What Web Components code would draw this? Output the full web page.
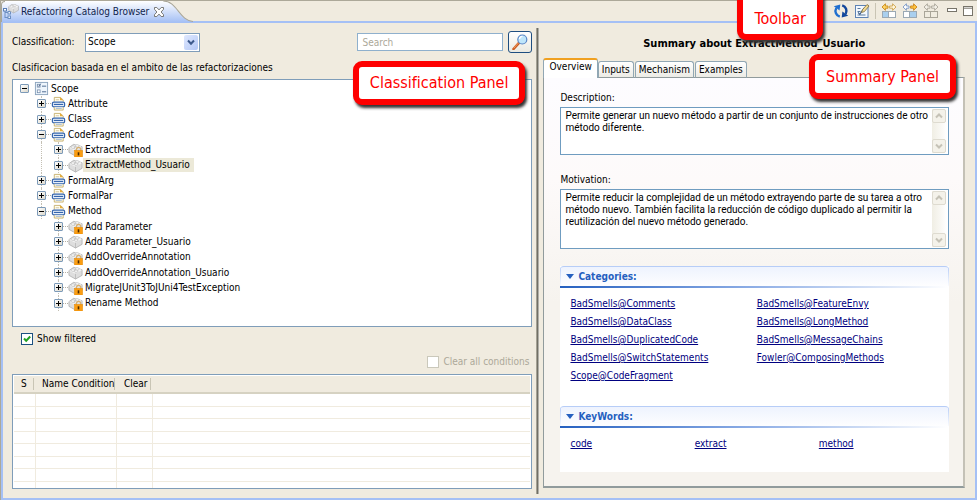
<!DOCTYPE html>
<html lang="es">
<head>
<meta charset="utf-8">
<title>Refactoring Catalog Browser</title>
<style>
html,body{margin:0;padding:0}
body{font:10px/12px "DejaVu Sans Condensed",Roboto,sans-serif;color:#000;background:#f0ebdf}
</style>
</head>
<body>
<catalog-view></catalog-view>
<script>
const define=(name,html,setup)=>customElements.define(name,class extends HTMLElement{
  constructor(){super();this.attachShadow({mode:'open'});}
  connectedCallback(){
    if(this.shadowRoot.childNodes.length)return;
    const t=document.createElement('template');
    t.innerHTML='<style>*{box-sizing:border-box}[hidden]{display:none}button,input,select,textarea{font:inherit;color:inherit;margin:0}</style>'+(typeof html==='function'?html(this):html);
    this.shadowRoot.append(t.content.cloneNode(true));
    if(setup)setup(this,this.shadowRoot);
  }
});

/* ---------- icons ---------- */
const brick='<path d="M1 6l5-3.500 3 .8L15 5v6l-7 4-7-4z" fill="#dedede" stroke="#a8a8a8" stroke-width=".8"/><path d="M1.200 6L8 9.300 14.800 5.200 9 2.400z" fill="#f6f6f6"/><path d="M8 9.300V15" stroke="#b4b4b4" stroke-width=".8"/><ellipse cx="5.300" cy="5.400" rx="2.200" ry="1.300" fill="#fff" stroke="#b0b0b0" stroke-width=".7"/><ellipse cx="9.800" cy="4.200" rx="2.200" ry="1.300" fill="#fff" stroke="#b0b0b0" stroke-width=".7"/><ellipse cx="8.600" cy="6.600" rx="2" ry="1.200" fill="#fff" stroke="#b0b0b0" stroke-width=".7"/>';
const cells=(a,b,s)=>`<rect x="1.5" y="8.5" width="6" height="6" fill="${a}" stroke="${s}"/><rect x="7.5" y="8.5" width="7" height="6" fill="${b}" stroke="${s}"/>`;
const arrowL=(f,s)=>`<path d="M1 4l3.400-3.200V3H7v2.200H4.400v2.100z" fill="${f}" stroke="${s}" stroke-width=".9"/>`;
const arrowR=(f,s)=>`<path d="M15 4l-3.400-3.200V3H8.600v2.200h3v2.100z" fill="${f}" stroke="${s}" stroke-width=".9"/>`;
const ICONS={
  view:'<path d="M2 5v9M2 8.500h3M2 13.500h3" stroke="#6d8fc2" fill="none"/><rect x=".5" y="4.500" width="3" height="2.500" fill="#fff" stroke="#5b7fb5"/><rect x="5" y="7.500" width="2.500" height="2.500" fill="#e8f0fb" stroke="#6d8fc2"/><rect x="5" y="12" width="2.500" height="2.500" fill="#e8f0fb" stroke="#6d8fc2"/><g transform="translate(5 -1.500) scale(.7)">'+brick+'</g>',
  scope:'<rect x="1.500" y="1.500" width="13" height="13" fill="#eef5fc" stroke="#8ba3bd"/><rect x="3.500" y="3.500" width="3" height="3" fill="#fff" stroke="#6f87a8" stroke-width=".8"/><path d="M4.200 4.800l1 1 2-3" stroke="#3a5580" fill="none" stroke-width=".8"/><rect x="3.500" y="9.500" width="3" height="3" fill="#fff" stroke="#6f87a8" stroke-width=".8"/><path d="M8.500 5.500h4.500M8.500 11.500h4.500" stroke="#46648c"/>',
  group:'<path d="M3.500 6V1.500H10l3 2.700V6" fill="#fffdf0" stroke="#c3aa64" stroke-width=".9"/><path d="M9.500 1v3.500H13z" fill="#e6ac3c"/><path d="M5 4h3.500" stroke="#c5b588" stroke-width=".8"/><rect x="1.500" y="6.500" width="13" height="5" rx="1.500" fill="#eef4fc" stroke="#3565ad" stroke-width="1.300"/><path d="M3 9h10" stroke="#3565ad" stroke-width="1.300"/><path d="M3.500 12v3h9.500v-3" fill="#fffbe8" stroke="#c3aa64" stroke-width=".9"/><path d="M5 13.200h6.500" stroke="#8aa6cf" stroke-width=".8"/>',
  brick,
  locked:brick+'<path d="M9 10V8a2.300 2.300 0 014.600 0v2" fill="none" stroke="#d8b070" stroke-width="1.200"/><rect x="7" y="9" width="8.500" height="7" fill="#fb9d12" stroke="#e58a06" stroke-width=".6"/><path d="M11.200 11v3.300" stroke="#4a2a00" stroke-width="1.700"/>',
  refresh:'<path d="M6.800 13.700A6 6 0 013.300 5" fill="none" stroke="#1f6fd0" stroke-width="2.400"/><path d="M.8 3.200L7.300 1.500 6.600 7.600z" fill="#1f6fd0"/><path d="M9.200 2.300a6 6 0 013.500 8.700" fill="none" stroke="#12479c" stroke-width="2.400"/><path d="M15.200 12.800L8.700 14.500 9.400 8.400z" fill="#12479c"/>',
  edit:'<rect x="1.500" y="2.500" width="12.500" height="12" fill="#f3f8fe" stroke="#5e83b4"/><path d="M3.500 5.500h3M3.500 8.500h3M3.500 12h8" stroke="#5b7a9e"/><path d="M4 9.300l1.800 2L10 5" fill="none" stroke="#3b5c88" stroke-width="1.100"/><path d="M7.500 9.500l1-2.800L13 1.500l2 1.500-4.600 5.600z" fill="#f4dc93" stroke="#81703e" stroke-width=".8"/>',
  showLeft:arrowL('#ffd568','#c78a1a')+arrowR('#fff6da','#cda24c')+cells('#a9cfee','#fff','#9ba9b4'),
  showRight:arrowL('#fff','#7695c4')+arrowR('#ffc53f','#c9831a')+cells('#fff','#a9cfee','#9ba9b4'),
  showBoth:arrowL('#f4f1e8','#a9a598')+arrowR('#f4f1e8','#a9a598')+cells('#f0ece0','#f0ece0','#a9a598'),
  min:'<rect x="3.500" y="5.500" width="9" height="3" fill="#fff" stroke="#77746a"/>',
  max:'<rect x="3.500" y="3.500" width="9" height="9" fill="#fff" stroke="#77746a"/><path d="M3 5.200h10" stroke="#77746a"/>',
  close:'<path d="M3.500 3.500h2.300L8 5.900l2.200-2.400h2.300v1.800L10.100 8l2.400 2.700v1.800h-2.300L8 10.100l-2.200 2.400H3.500v-1.800L5.900 8 3.500 5.300z" fill="#fff" stroke="#6c6c68" stroke-width=".9"/>',
  find:'<path d="M1.500 15L7 8.800" stroke="#cc5a1e" stroke-width="2.600" stroke-linecap="round"/><path d="M1.800 14.200L6.400 9" stroke="#f3a66d" stroke-width=".9"/><circle cx="10.300" cy="5.500" r="4.500" fill="#bfe6fb" stroke="#5a86c6" stroke-width="1.200"/><path d="M7.500 5a3 3 0 013-2.600" stroke="#fff" stroke-width="1.400" fill="none"/>'
};
define('app-icon',el=>`<style>:host{display:inline-block;width:16px;height:16px;flex:none}svg{display:block;width:100%;height:100%}</style>
<svg viewBox="0 0 16 16" aria-hidden="true">${ICONS[el.getAttribute('name')]}</svg>`);

define('tool-button',el=>`<style>:host{display:block;flex:none}button{display:block;border:0;background:none;padding:0}app-icon{display:block}</style>
<button type="button" aria-label="${el.getAttribute('label')}"><app-icon name="${el.getAttribute('icon')}"></app-icon></button>`);

/* ---------- title bar ---------- */
define('view-titlebar',`<style>
:host{display:flex;height:23px;border-top:1px solid #aca899;border-bottom:2px solid #a5c0f5;position:relative}
.tab{display:flex;align-items:center;gap:2px;position:relative;padding:0 26px 0 2px;margin-bottom:-1px;color:#10244e}
.tab>svg{position:absolute;inset:0;width:100%;height:100%}
.tab>*:not(svg){position:relative}
.tools{margin-left:auto;display:flex;align-items:center;gap:5px;padding-right:1px}
.sep{width:1px;height:16px;background:#c9c4b4}
.win{display:flex}
</style>
<div class="tab"><svg viewBox="0 0 192 21" preserveAspectRatio="none" aria-hidden="true"><defs><linearGradient id="g" x2="0" y2="1"><stop offset="0" stop-color="#fff"/><stop offset="1" stop-color="#a5c0f5"/></linearGradient></defs><path d="M0 21V4Q0 0 4 0H162C176 0 178 20 192 20.500V21z" fill="url(#g)"/><path d="M.5 21V4Q.5 .5 4 .5M162 0C176 0 178 20 192 20.500" fill="none" stroke="#a9a697"/></svg>
<app-icon name="view"></app-icon><span>Refactoring Catalog Browser</span><tool-button icon="close" label="Close"></tool-button></div>
<div class="tools"><tool-button icon="refresh" label="Refresh"></tool-button><tool-button icon="edit" label="Edit"></tool-button><span class="sep"></span>
<tool-button icon="showLeft" label="Show left"></tool-button><tool-button icon="showRight" label="Show right"></tool-button><tool-button icon="showBoth" label="Show both"></tool-button>
<div class="win"><tool-button icon="min" label="Minimize"></tool-button><tool-button icon="max" label="Maximize"></tool-button></div></div>`);

define('call-out',`<style>:host{display:block;border:6px solid #fe0000;border-radius:9px;background:#fff;box-shadow:2px 3px 3px #333;color:#f00;font-size:16px;line-height:20px;white-space:nowrap}</style><slot></slot>`);

/* ---------- classification side ---------- */
define('filter-bar',`<style>
:host{display:flex;align-items:center;height:22px}
label{width:73px;flex:none}
.sel{position:relative;width:115px;height:19px;flex:none}
select{width:100%;height:100%;appearance:none;border:1px solid #7f9db9;border-radius:0;background:#fff;padding:0 0 0 2px}
.arrow{position:absolute;right:2px;top:2px;width:14px;height:15px;border-radius:2px;background:linear-gradient(135deg,#dfe8fe,#b4c8f6);pointer-events:none}
.arrow svg{display:block;width:100%;height:100%}
input{margin-left:auto;width:146px;height:18px;border:1px solid #8fb0cd;background:#fff;padding:0 4px}
input::placeholder{color:#aca899;opacity:1}
button{width:24px;height:22px;margin-left:5px;padding:0 0 0 3px;border:1px solid #1f4e80;border-radius:3px;background:linear-gradient(#fff,#ebe9e0)}
app-icon{display:block}
</style>
<label for="c">Classification:</label><div class="sel"><select id="c"><option>Scope</option><option>Class</option></select><span class="arrow"><svg viewBox="0 0 14 15"><path d="M4 5.500l3 3.200 3-3.200" fill="none" stroke="#3d5a8c" stroke-width="2"/></svg></span></div>
<input type="search" placeholder="Search" aria-label="Search"><button type="button" aria-label="Search"><app-icon name="find"></app-icon></button>`);

define('tree-item',el=>{
  const lvl=+el.getAttribute('level'),open=el.hasAttribute('open');
  return `<style>
:host{display:flex;align-items:center;padding-left:${7+lvl*17}px;flex:1 1 0;min-height:0;position:relative;white-space:nowrap}
.guide{position:absolute;top:0;bottom:0;width:0;border-left:1px dotted #c4c0b4}
.line{width:5px;border-top:1px dotted #b4b0a4;flex:none}
button{width:9px;height:9px;padding:0;border:1px solid #7c9ab8;border-radius:1px;background:linear-gradient(135deg,#fff,#dcd8cc);flex:none;position:relative;z-index:1}
button svg{display:block;width:7px;height:7px}
app-icon{width:15px;height:15px}
span.t{padding:1px 4px 1px 2px}
:host([selected]) .t{background:#ece9d8}
</style>
${lvl>0?`<i class="guide" style="left:28px"${el.hasAttribute('last')?' hidden':''}></i>`:''}${lvl>1?'<i class="guide" style="left:45px"></i>':''}
<button type="button" aria-label="${open?'Collapse':'Expand'}"><svg viewBox="0 0 7 7"><path d="M1 3.500h5${open?'':'M3.500 1v5'}" stroke="#000"/></svg></button>
<i class="line" style="${lvl?'':'visibility:hidden'}"></i><app-icon name="${el.getAttribute('icon')}"></app-icon><span class="t"><slot></slot></span>`;
},el=>{el.setAttribute('role','treeitem');el.setAttribute('aria-level',+el.getAttribute('level')+1);});

define('scope-tree',`<style>
:host{display:block;background:#fff;border:1px solid #7f9db9;padding:1px 0 15px}
.rows{display:flex;flex-direction:column;height:230px}
</style>
<div class="rows" role="tree">
<tree-item level="0" icon="scope" open>Scope</tree-item>
<tree-item level="1" icon="group">Attribute</tree-item>
<tree-item level="1" icon="group">Class</tree-item>
<tree-item level="1" icon="group" open>CodeFragment</tree-item>
<tree-item level="2" icon="locked">ExtractMethod</tree-item>
<tree-item level="2" icon="brick" selected>ExtractMethod_Usuario</tree-item>
<tree-item level="1" icon="group">FormalArg</tree-item>
<tree-item level="1" icon="group">FormalPar</tree-item>
<tree-item level="1" icon="group" open>Method</tree-item>
<tree-item level="2" last icon="locked">Add Parameter</tree-item>
<tree-item level="2" last icon="brick">Add Parameter_Usuario</tree-item>
<tree-item level="2" last icon="locked">AddOverrideAnnotation</tree-item>
<tree-item level="2" last icon="brick">AddOverrideAnnotation_Usuario</tree-item>
<tree-item level="2" last icon="locked">MigrateJUnit3ToJUni4TestException</tree-item>
<tree-item level="2" last icon="locked">Rename Method</tree-item>
</div>`);

define('check-option',`<style>
:host{display:flex;align-items:center}
label{display:flex;align-items:center;gap:4px}
input{appearance:none;width:12px;height:12px;border:1px solid #1c5180;background:#fff}
input:checked{background:#fff url("data:image/svg+xml,%3Csvg xmlns='http://www.w3.org/2000/svg' viewBox='0 0 10 10'%3E%3Cpath d='M2 4.500l2.200 2.300L8.200 2.500' fill='none' stroke='%2321a121' stroke-width='2'/%3E%3C/svg%3E")}
input:disabled{border-color:#cac8bb}
:host([disabled]) label{color:#aca899}
</style><label><input type="checkbox"><slot></slot></label>`,(el,r)=>{const i=r.querySelector('input');i.checked=el.hasAttribute('checked');i.disabled=el.hasAttribute('disabled');});

define('conditions-table',`<style>
:host{display:block;border:1px solid #7f9db9;background:#fff;padding:1px;height:115px;overflow:hidden}
table{width:100%;border-collapse:separate;border-spacing:0;table-layout:fixed}
thead tr{height:18px}
th{font-weight:400;text-align:left;background:#f0ebdf;border-bottom:2px solid #d6d2c2;padding:0;white-space:nowrap}
th span{display:block;padding-left:7px;height:12px;margin-right:2px;border-right:1px solid #c9c5b5}
th:nth-child(2) span{padding-left:6px}
th:last-child span{border:0}
td{height:12px;padding:0;border-bottom:1px solid #f0ebdf;border-right:1px solid #f0ebdf}
td:last-child{border-right:0}
tr:nth-child(odd) td{height:13px}
</style><table><colgroup><col style="width:22px"><col style="width:81px"><col style="width:36px"><col></colgroup>
<thead><tr><th><span>S</span></th><th><span>Name Condition</span></th><th><span>Clear</span></th><th><span></span></th></tr></thead>
<tbody>${'<tr><td></td><td></td><td></td><td></td></tr>'.repeat(8)}</tbody></table>`);

define('classification-panel',`<style>
:host{display:flex;flex-direction:column;position:relative;min-width:0;padding:8px 0 9px}
p{margin:9px 0 5px}
.show{margin:6px 0 0 9px}
.clear{align-self:flex-end;margin:11px 3px 6px 0}
call-out{position:absolute;right:7px;top:38px;padding:6px 11px}
conditions-table{flex:1 0 auto}
</style><filter-bar></filter-bar><p>Clasificacion basada en el ambito de las refactorizaciones</p><scope-tree></scope-tree>
<check-option class="show" checked>Show filtered</check-option><check-option class="clear" disabled>Clear all conditions</check-option><conditions-table></conditions-table>
<call-out>Classification Panel</call-out>`);

/* ---------- summary side ---------- */
define('memo-field',el=>`<style>
:host{display:block}
label{display:block;margin-bottom:3px}
.box{display:flex;border:1px solid #6f9cc0;background:#fff;height:${el.getAttribute('rows')==='3'?60:48}px}
textarea{flex:1;border:0;outline:0;resize:none;background:none;padding:2px 0 0 4px;overflow:hidden;font-family:Roboto,sans-serif;line-height:12px}
.bar{width:15px;margin:1px;display:flex;flex-direction:column;justify-content:space-between;background:linear-gradient(90deg,#f0eee4,#fff)}
.bar button{width:14px;height:14px;border:1px solid #dedbd0;border-radius:2px;background:#f4f2ea;padding:0}
svg{display:block;width:12px;height:12px}
</style><label for="a">${el.getAttribute('label')}</label><div class="box"><textarea id="a" readonly>${el.textContent}</textarea>
<div class="bar"><button type="button" disabled aria-label="Scroll up"><svg viewBox="0 0 12 12"><path d="M3 7.500l3-3 3 3" fill="none" stroke="#c5c2b6" stroke-width="2"/></svg></button><button type="button" disabled aria-label="Scroll down"><svg viewBox="0 0 12 12"><path d="M3 4.500l3 3 3-3" fill="none" stroke="#c5c2b6" stroke-width="2"/></svg></button></div></div>`);

define('link-section',el=>`<style>
:host{display:block;background:#fff}
h2{display:flex;align-items:center;gap:4px;margin:0;height:22px;padding:0 6px 2px;font-size:10px;line-height:14px;color:#2560c0;border-radius:4px 4px 0 0;border-top:1px solid #b7cdf7;background:linear-gradient(90deg,#2560c0,#8eaee6 50%,#fff) bottom/100% 2px no-repeat,linear-gradient(#b7cdf7,#fff) left/1px 100% no-repeat,linear-gradient(#b7cdf7,#fff) right/1px 100% no-repeat,linear-gradient(#eef3fe,#fff)}
h2 svg{width:8px;height:5px}
.grid{display:grid;grid-template-columns:repeat(${el.getAttribute('columns')},1fr);padding:7px 6px 0 10px}
a{color:#000080;line-height:18px;text-decoration:underline}
</style><h2><svg viewBox="0 0 8 5"><path d="M0 0h8L4 5z" fill="#2560c0"/></svg>${el.getAttribute('heading')}</h2>
<div class="grid">${el.getAttribute('links').split(' ').map(l=>`<div><a href="#${l}">${l}</a></div>`).join('')}</div>`);

define('tab-strip',`<style>
:host{display:flex;align-items:flex-end;position:relative;z-index:1;margin-bottom:-1px}
button{height:17px;padding:0 3px;border:1px solid #91a7b4;border-bottom-color:#919b9c;border-radius:3px 3px 0 0;background:linear-gradient(#fff,#ecebe5);margin-right:1px}
button.on{height:20px;padding:0 5px 4px;margin-right:0;border-top:2px solid #f0a020;border-bottom:0;background:#fff}
</style><div role="tablist" style="display:contents"><button role="tab" aria-selected="true" class="on">Overview</button><button role="tab">Inputs</button><button role="tab">Mechanism</button><button role="tab">Examples</button></div>`);

define('summary-panel',`<style>
:host{display:flex;flex-direction:column;position:relative;min-width:0;padding:13px 0 10px}
h1{margin:0 0 6px;font-size:11px;line-height:16px;text-align:center}
.page{flex:1;border:1px solid #919b9c;border-width:1px 2px 2px 1px;border-right-color:#c4c1b6;padding:14px 14px 13px 16px;background:linear-gradient(#fdfcff,#fdfafa 25%,#f6f3ee 55%)}
.mot{margin-top:19px}
.cat{margin-top:17px;padding-bottom:21px}
.key{padding-bottom:19px}
call-out{position:absolute;right:9px;top:31px;padding:7px 11px 6px}
</style><h1>Summary about ExtractMethod_Usuario</h1><tab-strip></tab-strip>
<div class="page" role="tabpanel">
<memo-field label="Description:" rows="2">Permite generar un nuevo método a partir de un conjunto de instrucciones de otro método diferente.</memo-field>
<memo-field class="mot" label="Motivation:" rows="3">Permite reducir la complejidad de un método extrayendo parte de su tarea a otro método nuevo. También facilita la reducción de código duplicado al permitir la reutilización del nuevo método generado.</memo-field>
<link-section class="cat" heading="Categories:" columns="2" links="BadSmells@Comments BadSmells@FeatureEnvy BadSmells@DataClass BadSmells@LongMethod BadSmells@DuplicatedCode BadSmells@MessageChains BadSmells@SwitchStatements Fowler@ComposingMethods Scope@CodeFragment"></link-section>
<link-section class="key" heading="KeyWords:" columns="3" links="code extract method"></link-section>
</div><call-out>Summary Panel</call-out>`);

define('catalog-view',`<style>
:host{display:flex;flex-direction:column;min-height:100vh;box-sizing:border-box;position:relative;overflow:hidden;background:#f0ebdf;border-left:1px solid #aca899}
main{flex:1;display:grid;grid-template-columns:minmax(0,521fr) 3px minmax(0,422fr);column-gap:4px;padding:0 10px 0 9px;border:solid #a5c0f5;border-width:0 2px 2px}
.sash{margin:5px 0 4px;background:linear-gradient(90deg,#c8c4b8,#716f64 40%,#716f64 70%,#fff)}
call-out{position:absolute;right:154px;top:-14px;padding:17px 11px 5px}
</style><view-titlebar></view-titlebar><main><classification-panel></classification-panel><div class="sash"></div><summary-panel></summary-panel></main><call-out>Toolbar</call-out>`);
</script>
</body>
</html>
